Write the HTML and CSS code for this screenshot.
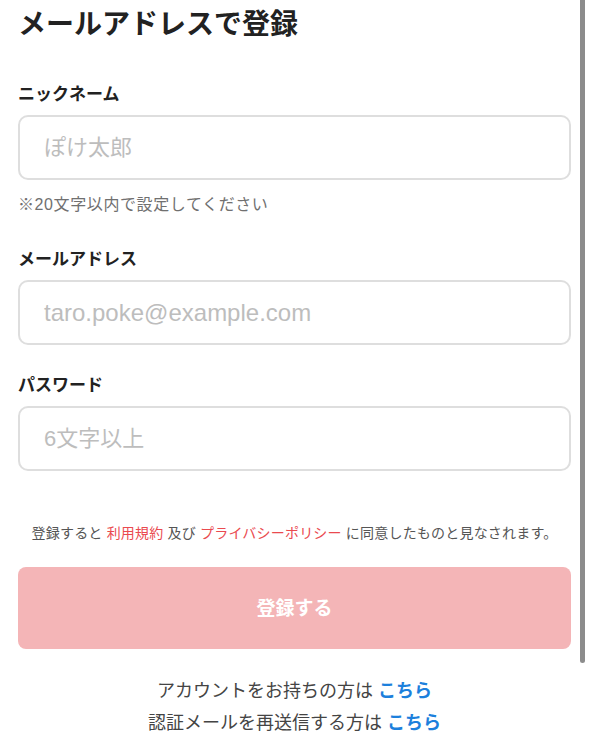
FILE: index.html
```html
<!DOCTYPE html>
<html lang="ja">
<head>
<meta charset="utf-8">
<link rel="stylesheet" href="styles.css">
</head>
<body>
<div class="page">
  <h1 class="title">メールアドレスで登録</h1>
  <div class="field first">
    <label class="label">ニックネーム</label>
    <div class="input"><span class="ph">ぽけ太郎</span></div>
    <p class="hint">※20文字以内で設定してください</p>
  </div>
  <div class="field second">
    <label class="label">メールアドレス</label>
    <div class="input"><span class="ph latin">taro.poke@example.com</span></div>
  </div>
  <div class="field third">
    <label class="label">パスワード</label>
    <div class="input"><span class="ph">6文字以上</span></div>
  </div>
  <p class="terms">登録すると <span class="red">利用規約</span> 及び <span class="red">プライバシーポリシー</span> に同意したものと見なされます。</p>
  <div class="button">登録する</div>
  <div class="links">
    <p class="link-line">アカウントをお持ちの方は <span class="blue">こちら</span></p>
    <p class="link-line">認証メールを再送信する方は <span class="blue">こちら</span></p>
  </div>
</div>
<div class="scrollbar"></div>
</body>
</html>
```
FILE: styles.css
```css
html, body {
  margin: 0;
  padding: 0;
  background: #fff;
}
body {
  font-family: "Liberation Sans", "Noto Sans CJK JP", sans-serif;
  color: #222;
  position: relative;
  min-height: 741px;
  overflow: hidden;
}
.page {
  padding: 7px 19px 0 18px;
  display: flex;
  flex-direction: column;
}
.title {
  margin: 0;
  font-size: 28px;
  line-height: 36px;
  font-weight: 700;
  color: #222;
}
.field {
  display: flex;
  flex-direction: column;
}
.field.first {
  margin-top: 40px;
}
.field.second {
  margin-top: 32px;
}
.field.third {
  margin-top: 29px;
}
.label {
  font-size: 17px;
  line-height: 24px;
  font-weight: 700;
  color: #222;
  margin-bottom: 8px;
}
.input {
  height: 65px;
  box-sizing: border-box;
  border: 2px solid #dedede;
  border-radius: 10px;
  display: flex;
  align-items: center;
  padding-left: 24px;
}
.ph {
  font-size: 22px;
  color: #bdbdbd;
  line-height: 30px;
}
.ph.latin {
  font-size: 24px;
}
.hint {
  margin: 14px 0 0;
  font-size: 16px;
  line-height: 22px;
  color: #707070;
  letter-spacing: 0.6px;
}
.terms {
  margin: 52px 0 0;
  text-align: center;
  font-size: 14px;
  line-height: 20px;
  color: #555;
  letter-spacing: 0.2px;
}
.red {
  color: #ea4a4f;
}
.button {
  margin-top: 24px;
  height: 82px;
  background: #f4b5b7;
  border-radius: 8px;
  color: #fff;
  font-size: 19px;
  font-weight: 700;
  display: flex;
  align-items: center;
  justify-content: center;
  padding-bottom: 3px;
  box-sizing: border-box;
}
.links {
  margin-top: 26px;
  display: flex;
  flex-direction: column;
  align-items: center;
}
.link-line {
  margin: 0;
  font-size: 18px;
  line-height: 32px;
  color: #444;
}
.blue {
  color: #1c80dc;
  font-weight: 700;
}
.scrollbar {
  position: absolute;
  top: 0;
  left: 580px;
  width: 5px;
  height: 663px;
  background: #8c8c8c;
  border-radius: 0 0 3px 3px;
}
```
